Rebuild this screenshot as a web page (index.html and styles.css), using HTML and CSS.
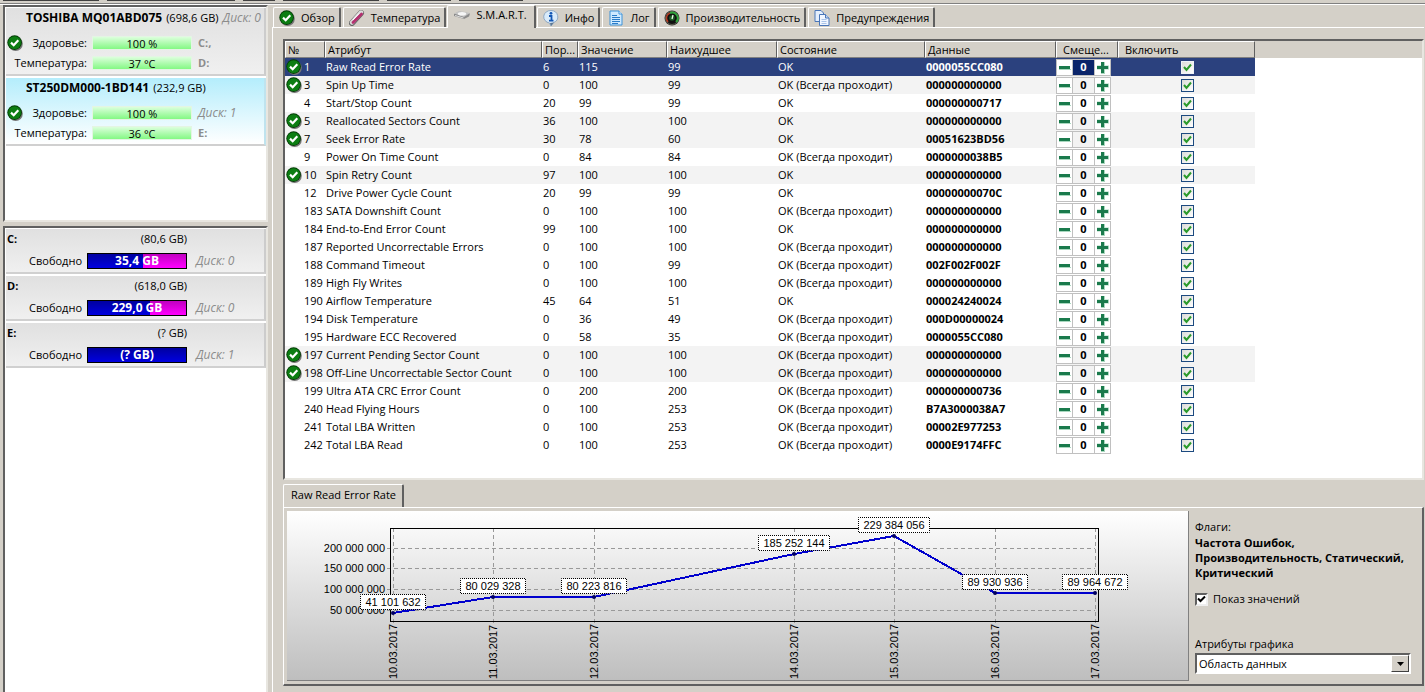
FILE: index.html
```html
<!DOCTYPE html>
<html lang="ru">
<head>
    <meta charset="UTF-8">
    <meta name="viewport" content="width=device-width, initial-scale=1.0">
    <title>S.M.A.R.T.</title>
    <link rel="stylesheet" href="styles.css">
</head>
<body>

    <svg class="defs" width="0" height="0">
        <symbol id="ok" viewBox="0 0 16 16">
            <circle cx="8.6" cy="8.8" r="7.2" fill="#777"/>
            <circle cx="7.6" cy="7.6" r="7.3" fill="#033c05"/>
            <circle cx="7.6" cy="7.6" r="6.4" fill="#0c7d12"/>
            <path d="M4 7.6 6.7 10.2 11.3 5.2" fill="none" stroke="#fff" stroke-width="2.2"/>
        </symbol>
        <symbol id="mark" viewBox="0 0 9 9">
            <path d="M1 4 3.5 7 8 1.5" fill="none" stroke="#2c9a2c" stroke-width="2"/>
        </symbol>
    </svg>

    <div class="toolbar">
        <span class="w96"></span><span class="w128"></span><span class="w32"></span><span class="w96"></span><span class="w64"></span><span class="w64"></span>
    </div>

    <div class="window">
        <aside class="sidebar">
            <div class="list disks">
                <div class="disk">
                    <div class="disk-title"><b>TOSHIBA MQ01ABD075</b><span>(698,6 GB)</span><i>Диск: 0</i></div>
                    <div class="disk-row">
                        <svg class="ok"><use href="#ok"/></svg><span class="name">Здоровье:</span><span class="bar">100 %</span><b class="drive">C:,</b>
                    </div>
                    <div class="disk-row">
                        <span class="name">Температура:</span><span class="bar">37 °C</span><b class="drive">D:</b>
                    </div>
                </div>
                <div class="disk selected">
                    <div class="disk-title"><b>ST250DM000-1BD141</b><span>(232,9 GB)</span></div>
                    <div class="disk-row">
                        <svg class="ok"><use href="#ok"/></svg><span class="name">Здоровье:</span><span class="bar">100 %</span><i class="drive">Диск: 1</i>
                    </div>
                    <div class="disk-row">
                        <span class="name">Температура:</span><span class="bar">36 °C</span><b class="drive">E:</b>
                    </div>
                </div>
            </div>

            <div class="list volumes">
                <div class="volume">
                    <div class="volume-title"><b>C:</b><span>(80,6 GB)</span></div>
                    <div class="volume-row"><span class="name">Свободно</span><span class="space"><span class="used" style="width: 56%"></span><b>35,4 GB</b></span><i>Диск: 0</i></div>
                </div>
                <div class="volume">
                    <div class="volume-title"><b>D:</b><span>(618,0 GB)</span></div>
                    <div class="volume-row"><span class="name">Свободно</span><span class="space"><span class="used" style="width: 63%"></span><b>229,0 GB</b></span><i>Диск: 0</i></div>
                </div>
                <div class="volume">
                    <div class="volume-title"><b>E:</b><span>(? GB)</span></div>
                    <div class="volume-row"><span class="name">Свободно</span><span class="space"><span class="used" style="width: 100%"></span><b>(? GB)</b></span><i>Диск: 1</i></div>
                </div>
            </div>
        </aside>

        <main class="main">
            <nav class="tabs">
                <button class="tab"><svg><use href="#ok"/></svg>Обзор</button>
                <button class="tab">
                    <svg viewBox="0 0 16 16"><path d="M3 13 12 3" stroke="#666" stroke-width="6" stroke-linecap="round"/><path d="M3 12.5 12 2.5" stroke="#ddd" stroke-width="4.4" stroke-linecap="round"/><path d="M4 12.5 12.5 4" stroke="#b3306f" stroke-width="2.8" stroke-linecap="round"/><path d="M4 10 10 3.5" stroke="#fff"/></svg>Температура
                </button>
                <button class="tab active">
                    <svg viewBox="0 0 16 16"><path d="M0 7 5 4.500 16 6.500 15 9.500 10 12 0 9Z" fill="#8c8c8c"/><path d="M0 6.500 5 4 16 6 10 10Z" fill="#c4c4c4"/><ellipse cx="8" cy="6.700" rx="4.200" ry="1.800" fill="#f6f6f6"/><path d="M1 8.500 9.500 11" stroke="#ddd"/></svg>S.M.A.R.T.
                </button>
                <button class="tab">
                    <svg viewBox="0 0 16 16"><path d="M8 .5A7 6.3 0 0 1 10.5 12.6L8 16 6.5 13A7 6.3 0 0 1 8 .5Z" fill="#d9ebfa" stroke="#8fa9c4"/><path d="M11 12.5 8 16 7 13" fill="#5f7892"/><circle cx="8" cy="3.3" r="1.4" fill="#1257b5"/><path d="M6 6h2.5v4.5M6 10.7h4.5" fill="none" stroke="#1257b5" stroke-width="1.8"/></svg>Инфо
                </button>
                <button class="tab">
                    <svg viewBox="0 0 16 16"><path d="M2 1h9l3 3v11H2Z" fill="#cfeaff" stroke="#3f93d8"/><path d="M11 1v3h3" fill="#fff" stroke="#3f93d8"/><path d="M4 5.5h5M4 7.5h8M4 9.5h8M4 11.5h8M4 13.5h6" stroke="#2a7cc8"/></svg>Лог
                </button>
                <button class="tab">
                    <svg viewBox="0 0 16 16"><circle cx="8" cy="8" r="7.5" fill="#2b2b2b"/><circle cx="8" cy="8" r="6.5" fill="#111" stroke="#8a8a70" stroke-width=".6"/><path d="M4 12A5.5 5.5 0 0 1 6 3" fill="none" stroke="#b33b22" stroke-width="1.5"/><path d="M6 3A5.5 5.5 0 0 1 12 12" fill="none" stroke="#2fa33c" stroke-width="2"/><circle cx="8" cy="8" r="2.8" fill="#1d5c26"/><path d="M8 9 9 5" stroke="#e8ffe8" stroke-width="1.3"/></svg>Производительность
                </button>
                <button class="tab">
                    <svg viewBox="0 0 16 16"><path d="M1 .5h6l2.5 2.5v8.5H1Z" fill="#e4eefc" stroke="#4a76b8"/><path d="M5.5 4.5h6l3.5 3.5v7.5H5.5Z" fill="#f1f6ff" stroke="#4a76b8"/><path d="M11.5 4.5V8H15" fill="#c4d8f4" stroke="#4a76b8"/><path d="M7.5 9.5h5M7.5 11.5h5M7.5 13.5h5" stroke="#a9c3e8"/></svg>Предупреждения
                </button>
            </nav>

            <div class="page">
                <div class="list attributes">
                    <table>
                        <colgroup>
                            <col class="c-num"><col class="c-attr"><col class="c-limit"><col class="c-value"><col class="c-worst"><col class="c-state"><col class="c-data"><col class="c-shift"><col class="c-on"><col>
                        </colgroup>
                        <thead>
                            <tr>
                                <th>№</th><th>Атрибут</th><th>Пор...</th><th>Значение</th><th>Наихудшее</th><th>Состояние</th><th>Данные</th><th class="wide">Смеще...</th><th class="wide">Включить</th><td class="filler"></td>
                            </tr>
                        </thead>
                        <tbody id="rows"></tbody>
                    </table>
                </div>

                <div class="graph-tabs"><button class="graph-tab">Raw Read Error Rate</button></div>
                <section class="graph">
                    <div class="chart">
                        <svg viewBox="0 0 900 169" preserveAspectRatio="xMinYMin" id="chart">
                            <path class="grid" d="M100 37.5H808M100 57.5H808M100 78.5H808M100 99.5H808"/>
                            <path class="grid" d="M106.5 17V114M206.5 17V114M307.5 17V114M507.5 17V114M607.5 17V114M708.5 17V114M808.5 17V114"/>
                            <rect class="frame" x="103.5" y="17.5" width="708" height="93"/>
                            <g class="scale">
                                <text x="98" y="41">200 000 000</text>
                                <text x="98" y="61">150 000 000</text>
                                <text x="98" y="82">100 000 000</text>
                                <text x="98" y="103">50 000 000</text>
                            </g>
                            <polyline class="line" points="106,102 206,86 307,86 507,43 607,25 708,82 808,82"/>
                        </svg>
                    </div>
                    <div class="options">
                        <div>Флаги:</div>
                        <b class="flags">Частота Ошибок, Производительность, Статический, Критический</b>
                        <label class="check"><input type="checkbox" checked><svg viewBox="0 0 9 9"><path d="M1 3.5 3.5 6 8 1.5" fill="none" stroke="#000" stroke-width="2"/></svg>Показ значений</label>
                        <label class="select-label" for="area">Атрибуты графика</label>
                        <div class="select">
                            <select id="area"><option>Область данных</option></select>
                            <span class="arrow"><svg viewBox="0 0 7 4"><path d="M0 0H7L3.5 4Z"/></svg></span>
                        </div>
                    </div>
                </section>
            </div>
        </main>
    </div>

    <script>
        // number, name, threshold, value, worst, always passes, data, critical
        const attributes = [
            [1, "Raw Read Error Rate", 6, 115, 99, 0, "0000055CC080", 1],
            [3, "Spin Up Time", 0, 100, 99, 1, "000000000000", 1],
            [4, "Start/Stop Count", 20, 99, 99, 0, "000000000717", 0],
            [5, "Reallocated Sectors Count", 36, 100, 100, 0, "000000000000", 1],
            [7, "Seek Error Rate", 30, 78, 60, 0, "00051623BD56", 1],
            [9, "Power On Time Count", 0, 84, 84, 1, "0000000038B5", 0],
            [10, "Spin Retry Count", 97, 100, 100, 0, "000000000000", 1],
            [12, "Drive Power Cycle Count", 20, 99, 99, 0, "00000000070C", 0],
            [183, "SATA Downshift Count", 0, 100, 100, 1, "000000000000", 0],
            [184, "End-to-End Error Count", 99, 100, 100, 0, "000000000000", 0],
            [187, "Reported Uncorrectable Errors", 0, 100, 100, 1, "000000000000", 0],
            [188, "Command Timeout", 0, 100, 99, 1, "002F002F002F", 0],
            [189, "High Fly Writes", 0, 100, 100, 1, "000000000000", 0],
            [190, "Airflow Temperature", 45, 64, 51, 0, "000024240024", 0],
            [194, "Disk Temperature", 0, 36, 49, 1, "000D00000024", 0],
            [195, "Hardware ECC Recovered", 0, 58, 35, 1, "0000055CC080", 0],
            [197, "Current Pending Sector Count", 0, 100, 100, 1, "000000000000", 1],
            [198, "Off-Line Uncorrectable Sector Count", 0, 100, 100, 1, "000000000000", 1],
            [199, "Ultra ATA CRC Error Count", 0, 200, 200, 1, "000000000736", 0],
            [240, "Head Flying Hours", 0, 100, 253, 1, "B7A3000038A7", 0],
            [241, "Total LBA Written", 0, 100, 253, 1, "00002E977253", 0],
            [242, "Total LBA Read", 0, 100, 253, 1, "0000E9174FFC", 0]
        ];

        document.getElementById("rows").innerHTML = attributes.map(function (a, i) {
            const cls = i == 0 ? "current" : a[7] ? "critical" : "";
            return `<tr class="${cls}">
                <td><div class="num"><span class="state">${a[7] ? '<svg><use href="#ok"/></svg>' : ""}</span>${a[0]}</div></td>
                <td>${a[1]}</td><td>${a[2]}</td><td>${a[3]}</td><td>${a[4]}</td>
                <td>${a[5] ? "OK (Всегда проходит)" : "OK"}</td>
                <td><b>${a[6]}</b></td>
                <td class="shift"><div class="stepper">
                    <button aria-label="-"><svg viewBox="0 0 13 13"><path d="M1 8.5H13" stroke="#a9d8bf"/><path d="M1 6.5H12" stroke="#1a7a4c" stroke-width="3"/></svg></button>
                    <input type="text" value="0" aria-label="${a[1]}">
                    <button aria-label="+"><svg viewBox="0 0 13 13"><path d="M1 6.5H13M7 1V13" stroke="#a9d8bf" stroke-width="4"/><path d="M1 6.5H12M6.5 1V12" stroke="#1a7a4c" stroke-width="3"/></svg></button>
                </div></td>
                <td><label class="enable"><input type="checkbox" checked aria-label="${a[1]}"><svg><use href="#mark"/></svg></label></td>
                <td class="filler"></td>
            </tr>`;
        }).join("");

        // x, y of the point, value, date
        const points = [
            [106, 102, "41 101 632", "10.03.2017"],
            [206, 86, "80 029 328", "11.03.2017"],
            [307, 86, "80 223 816", "12.03.2017"],
            [507, 43, "185 252 144", "14.03.2017"],
            [607, 25, "229 384 056", "15.03.2017"],
            [708, 82, "89 930 936", "16.03.2017"],
            [808, 82, "89 964 672", "17.03.2017"]
        ];

        document.getElementById("chart").innerHTML += points.map(function (p) {
            const w = p[2].length > 10 ? 71 : 65;
            const left = p[0] - (w - 1) / 2 - 0.5;
            return `<circle cx="${p[0]}" cy="${p[1]}" r="2" fill="#000060"/>
                <rect class="mark" x="${left}" y="${p[1] - 18.5}" width="${w}" height="15"/>
                <text class="value" x="${p[0]}" y="${p[1] - 7}">${p[2]}</text>
                <text class="date" transform="translate(${p[0] + 4} 168) rotate(-90)">${p[3]}</text>`;
        }).join("");
    </script>

</body>
</html>
```
FILE: styles.css
```css
* {
    box-sizing: border-box;
}
body {
    margin: 0;
    min-height: 100vh;
    display: flex;
    flex-direction: column;
    background: #d4d0c8;
    color: #000;
    font-family: "Open Sans", "Noto Sans", sans-serif;
    font-size: 11px;
    line-height: 14px;
}
button, input, select {
    font: inherit;
    color: inherit;
    margin: 0;
    padding: 0;
}
.defs {
    position: absolute;
}
.toolbar {
    display: flex;
    gap: 8px;
    height: 4px;
    padding-left: 3px;
    border-bottom: 1px solid #808080;
}
.toolbar span {
    height: 1px;
    background: #404040;
}
.w32 { width: 32px; }
.w64 { width: 64px; }
.w96 { width: 96px; }
.w128 { width: 128px; }
.window {
    flex: 1;
    display: flex;
    border-top: 1px solid #fff;
}

/* left column */
.sidebar {
    width: 268px;
    padding-left: 3px;
    display: flex;
    flex-direction: column;
    gap: 4px;
    flex-shrink: 0;
}
.list {
    background: #fff;
    border: 2px solid;
    border-color: #606060 #e8e6e0 #e8e6e0 #606060;
}
.disks {
    height: 217px;
}
.volumes {
    flex: 1;
    border-bottom: none;
}
.disk, .volume {
    background: linear-gradient(#e0e0e0, #f0f0f0);
    border-right: 2px solid #ccc;
    border-bottom: 2px solid #d0d0d0;
    margin: 1px 0 2px 1px;
}
.disk {
    height: 68px;
    padding-left: 1px;
}
.disk.selected {
    background: linear-gradient(#b4edfc, #fff);
    border-right-color: #bfe3ee;
}
.disk-title {
    display: flex;
    align-items: baseline;
    gap: 4px;
    padding: 3px 0 0 19px;
    height: 25px;
    white-space: nowrap;
}
.disk-title b {
    font-size: 12px;
}
.disk i, .volume i {
    font-size: 12px;
}
.disk i, .volume i, .drive {
    color: #8c8c8c;
}
.disk-row {
    display: flex;
    align-items: center;
    height: 20px;
}
.disk-row .name {
    width: 85px;
    padding-right: 5px;
    text-align: right;
}
.ok {
    width: 16px;
    height: 16px;
    flex-shrink: 0;
    margin-right: -16px;
}
.bar {
    width: 100px;
    height: 14px;
    border: 1px solid #e4f5e4;
    background: linear-gradient(#dcffdc, #84f884);
    text-align: center;
    line-height: 13px;
}
.drive {
    padding-left: 6px;
}
.volume {
    height: 45px;
    padding-left: 1px;
}
.volume-title {
    display: flex;
    justify-content: space-between;
    width: 180px;
    padding-top: 3px;
}
.volume-row {
    display: flex;
    align-items: center;
    padding-top: 7px;
}
.volume-row .name {
    width: 80px;
    padding-right: 5px;
    text-align: right;
}
.volume-row i {
    padding-left: 9px;
}
.space {
    display: grid;
    width: 100px;
    height: 16px;
    border: 1px solid #000;
    background: linear-gradient(#c000c0, #ff00ff);
    color: #fff;
    text-align: center;
}
.space > * {
    grid-area: 1 / 1;
}
.used {
    background: linear-gradient(#0000a0, #0000e0);
}
.space b {
    font-size: 12px;
    z-index: 1;
}

/* tabs */
.main {
    flex: 1;
    min-width: 0;
    padding: 0 1px 0 4px;
    display: flex;
    flex-direction: column;
}
.tabs {
    display: flex;
    align-items: flex-end;
    gap: 2px;
    height: 22px;
    padding-left: 1px;
}
.tab {
    display: flex;
    align-items: center;
    gap: 6px;
    height: 20px;
    padding: 0 4px 0 5px;
    border: 1px solid #fff;
    border-right: 2px solid #606060;
    border-bottom: none;
    border-radius: 2px 2px 0 0;
    background: #d4d0c8;
    white-space: nowrap;
}
.tab svg {
    width: 16px;
    height: 16px;
}
.tab.active {
    height: 23px;
    margin: 0 -1px -1px;
    padding: 0 7px 4px 6px;
    z-index: 1;
}
.page {
    flex: 1;
    border-top: 1px solid #fff;
    border-left: 1px solid #fff;
    padding: 11px 0 7px 10px;
}

/* attribute table */
.attributes {
    padding-bottom: 24px;
    overflow: hidden;
}
table {
    width: 100%;
    table-layout: fixed;
    border-collapse: separate;
    border-spacing: 0;
}
.c-num { width: 40px; }
.c-attr { width: 217px; }
.c-limit { width: 36px; }
.c-value { width: 89px; }
.c-worst { width: 110px; }
.c-state { width: 148px; }
.c-data { width: 131px; }
.c-shift { width: 62px; }
.c-on { width: 137px; }
th {
    height: 17px;
    padding: 0 0 0 2px;
    background: #d4d0c8;
    border: 1px solid;
    border-color: #fff #606060 #808080 #fff;
    font-weight: normal;
    text-align: left;
    line-height: 14px;
    white-space: nowrap;
    overflow: hidden;
}
th.wide {
    padding-left: 6px;
}
thead .filler {
    background: #d4d0c8;
}
tbody td {
    height: 18px;
    padding: 0 0 0 1px;
    line-height: 16px;
    white-space: nowrap;
}
.critical td {
    background: #f3f3f3;
}
.current td {
    background: #2b417e;
    color: #fff;
}
tbody tr .filler {
    background: #fff;
}
.num {
    display: flex;
    align-items: center;
}
.state {
    width: 18px;
    height: 16px;
}
.state svg {
    width: 16px;
    height: 16px;
}
tbody .shift {
    padding: 0;
}
.stepper {
    display: flex;
    height: 17px;
}
.stepper button {
    display: flex;
    align-items: center;
    justify-content: center;
    width: 17px;
    background: #fff;
    border: 1px solid #c0c0c0;
}
.stepper button svg {
    width: 13px;
    height: 13px;
    flex-shrink: 0;
}
.stepper input {
    width: 21px;
    border: 1px solid #c0c0c0;
    border-width: 1px 0;
    background: transparent;
    font-weight: bold;
    text-align: center;
}
.current .stepper input {
    background: #0a246a;
}
.enable {
    display: grid;
    width: 13px;
    height: 13px;
    margin: 0 auto;
}
.enable > * {
    grid-area: 1 / 1;
}
.enable input {
    appearance: none;
    width: 13px;
    height: 13px;
    border: 1px solid #1c4a80;
    background: linear-gradient(135deg, #dcdcd8, #fff);
}
.current .enable input {
    border-color: #eef3f8;
}
.enable svg {
    width: 9px;
    height: 9px;
    place-self: center;
}

/* graph */
.graph-tabs {
    padding-top: 4px;
    height: 27px;
}
.graph-tab {
    height: 23px;
    padding: 0 6px 2px 7px;
    background: #d4d0c8;
    border: 1px solid #fff;
    border-right: 2px solid #606060;
    border-bottom: none;
    border-radius: 2px 2px 0 0;
}
.graph {
    display: flex;
    border: 1px solid #fff;
    border-right: 2px solid #606060;
    border-bottom: 2px solid #606060;
    padding: 3px 0 3px 3px;
}
.chart {
    flex: 1;
    min-width: 0;
    background: linear-gradient(#fff, #bebebe);
    border-right: 1px solid #808080;
    border-bottom: 1px solid #808080;
}
.chart svg {
    display: block;
    width: 100%;
    height: 169px;
    font-family: "Liberation Sans", Arial, sans-serif;
    font-size: 11px;
}
.grid {
    stroke: #999;
    stroke-dasharray: 4 3;
}
.frame {
    fill: none;
    stroke: #000;
}
.scale text {
    text-anchor: end;
}
.line {
    fill: none;
    stroke: #0000cd;
    stroke-width: 2;
    shape-rendering: crispEdges;
}
.mark {
    fill: #fff;
    stroke: #000;
    stroke-dasharray: 1;
    stroke-dashoffset: 0.5;
}
.value {
    text-anchor: middle;
}
.options {
    width: 233px;
    padding: 9px 11px 0 6px;
    display: flex;
    flex-direction: column;
}
.flags {
    line-height: 15px;
    margin-top: 1px;
}
.check {
    display: grid;
    grid-template-columns: 13px 1fr;
    column-gap: 5px;
    align-items: center;
    margin-top: 12px;
}
.check input {
    grid-area: 1 / 1;
    appearance: none;
    width: 13px;
    height: 13px;
    background: #fff;
    border: 2px solid;
    border-color: #606060 #eee #eee #606060;
}
.check svg {
    grid-area: 1 / 1;
    width: 9px;
    height: 9px;
    margin: 2px;
    z-index: 1;
}
.select-label {
    margin-top: 31px;
}
.select {
    display: grid;
    grid-template-columns: 1fr 18px;
    margin-top: 2px;
    height: 21px;
    border: 2px solid;
    border-color: #606060 #fff #fff #606060;
    background: #fff;
}
.select select {
    grid-area: 1 / 1 / 2 / 3;
    appearance: none;
    border: none;
    background: none;
    padding-left: 2px;
}
.arrow {
    grid-area: 1 / 2;
    display: flex;
    align-items: center;
    justify-content: center;
    background: #d4d0c8;
    border: 1px solid;
    border-color: #fff #404040 #404040 #fff;
    pointer-events: none;
}
.arrow svg {
    width: 7px;
    height: 4px;
}
```
